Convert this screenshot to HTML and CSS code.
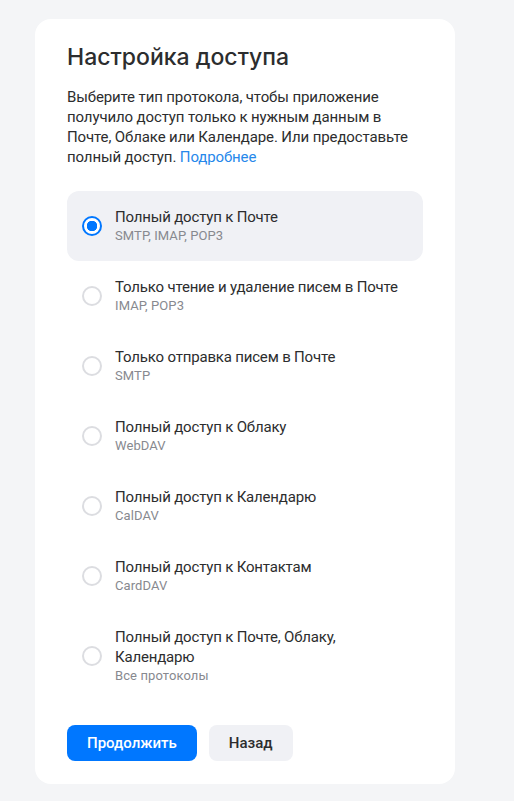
FILE: index.html
```html
<!DOCTYPE html>
<html lang="ru">
<head>
    <meta charset="UTF-8">
    <meta name="viewport" content="width=device-width, initial-scale=1.0">
    <title>Настройка доступа</title>
    <link rel="stylesheet" href="styles.css">
</head>
<body>
    <div class="card">
        <h1>Настройка доступа</h1>
        <p class="intro">
            Выберите тип протокола, чтобы приложение получило доступ только к нужным данным в Почте, Облаке или Календаре. Или предоставьте полный доступ. <a href="#">Подробнее</a>
        </p>

        <div class="options">
            <label class="option selected">
                <span class="radio"></span>
                <span class="option-text">
                    <span class="option-title">Полный доступ к Почте</span>
                    <span class="option-sub">SMTP, IMAP, POP3</span>
                </span>
            </label>
            <label class="option">
                <span class="radio"></span>
                <span class="option-text">
                    <span class="option-title">Только чтение и удаление писем в Почте</span>
                    <span class="option-sub">IMAP, POP3</span>
                </span>
            </label>
            <label class="option">
                <span class="radio"></span>
                <span class="option-text">
                    <span class="option-title">Только отправка писем в Почте</span>
                    <span class="option-sub">SMTP</span>
                </span>
            </label>
            <label class="option">
                <span class="radio"></span>
                <span class="option-text">
                    <span class="option-title">Полный доступ к Облаку</span>
                    <span class="option-sub">WebDAV</span>
                </span>
            </label>
            <label class="option">
                <span class="radio"></span>
                <span class="option-text">
                    <span class="option-title">Полный доступ к Календарю</span>
                    <span class="option-sub">CalDAV</span>
                </span>
            </label>
            <label class="option">
                <span class="radio"></span>
                <span class="option-text">
                    <span class="option-title">Полный доступ к Контактам</span>
                    <span class="option-sub">CardDAV</span>
                </span>
            </label>
            <label class="option">
                <span class="radio"></span>
                <span class="option-text">
                    <span class="option-title">Полный доступ к Почте, Облаку,<br>Календарю</span>
                    <span class="option-sub">Все протоколы</span>
                </span>
            </label>
        </div>

        <div class="actions">
            <button class="btn btn-primary">Продолжить</button>
            <button class="btn btn-secondary">Назад</button>
        </div>
    </div>
</body>
</html>
```

FILE: styles.css
```css
body {
    font-family: Roboto, "Liberation Sans", Arial, sans-serif;
    background-color: #f4f5f7;
    color: #2c2d2e;
    margin: 0;
    padding: 19px 0 0 35px;
}

.card {
    width: 356px;
    background: white;
    padding: 24px 32px 23px;
    border-radius: 16px;
}

h1 {
    font-family: Inter, "Noto Sans", sans-serif;
    font-weight: 500;
    font-size: 23px;
    line-height: 28px;
    margin: 0 0 16px;
}

.intro {
    font-size: 15px;
    line-height: 20px;
    letter-spacing: -0.12px;
    margin: 0 0 24px;
}

.intro a {
    color: #2688eb;
    text-decoration: none;
}

.options {
    display: flex;
    flex-direction: column;
}

.option {
    display: flex;
    align-items: center;
    gap: 13px;
    padding: 16px 15px;
    border-radius: 12px;
    cursor: pointer;
}

.option.selected {
    background-color: #f0f1f5;
}

.radio {
    flex: none;
    width: 16px;
    height: 16px;
    border: 2px solid #dcdde1;
    border-radius: 50%;
    box-sizing: content-box;
    background: white;
}

.option.selected .radio {
    border-color: #0077ff;
    background: radial-gradient(circle, #0077ff 0 5px, white 5.5px);
}

.option-text {
    display: flex;
    flex-direction: column;
}

.option-title {
    font-size: 15px;
    line-height: 20px;
    letter-spacing: -0.18px;
}

.option-sub {
    font-size: 13px;
    line-height: 18px;
    letter-spacing: 0.1px;
    color: #87898f;
}

.actions {
    display: flex;
    gap: 12px;
    margin-top: 24px;
}

.btn {
    height: 36px;
    padding: 0 20px;
    border: none;
    border-radius: 8px;
    font-family: Roboto, "Liberation Sans", Arial, sans-serif;
    font-size: 15px;
    font-weight: 500;
    cursor: pointer;
}

.btn-primary {
    background-color: #0077ff;
    color: white;
}

.btn-secondary {
    background-color: #f0f1f5;
    color: #2c2d2e;
}
```
